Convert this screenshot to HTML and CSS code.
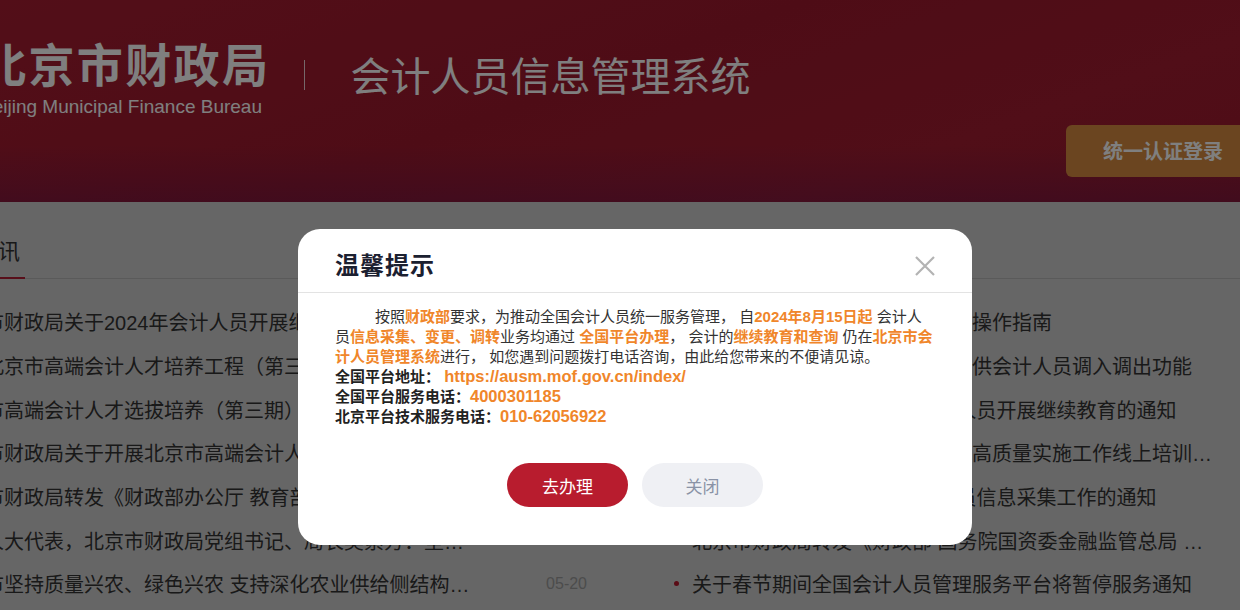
FILE: index.html
```html
<!DOCTYPE html>
<html lang="zh-CN">
<head>
    <meta charset="UTF-8">
    <meta name="viewport" content="width=device-width, initial-scale=1.0">
    <title>北京市财政局 - 会计人员信息管理系统</title>
    <link rel="stylesheet" href="styles.css">
</head>
<body>
    <!-- 头部 -->
    <div class="header">
        <div class="header-inner">
            <div class="brand">
                <div class="brand-cn">北京市财政局</div>
                <div class="brand-en">Beijing Municipal Finance Bureau</div>
            </div>
            <div class="brand-sep"></div>
            <div class="sys-title">会计人员信息管理系统</div>
            <a class="login-btn" href="#">统一认证登录</a>
        </div>
    </div>

    <!-- 通知资讯 -->
    <div class="main">
        <div class="news">
            <div class="tab-bar">
                <div class="tab active">通知资讯</div>
            </div>
            <div class="news-cols">
                <ul class="news-list">
                    <li><span class="news-title">北京市财政局关于2024年会计人员开展继续教育工作的通知</span><span class="news-date">06-12</span></li>
                    <li><span class="news-title">关于北京市高端会计人才培养工程（第三期）学员选拔结果的公示</span><span class="news-date">06-05</span></li>
                    <li><span class="news-title">北京市高端会计人才选拔培养（第三期）项目实施方案</span><span class="news-date">05-30</span></li>
                    <li><span class="news-title">北京市财政局关于开展北京市高端会计人才选拔培养（第三期）工作的通知</span><span class="news-date">05-28</span></li>
                    <li><span class="news-title">北京市财政局转发《财政部办公厅 教育部办公厅关于加强会计人才培养的通知》</span><span class="news-date">05-24</span></li>
                    <li><span class="news-title">全国人大代表，北京市财政局党组书记、局长吴素芳：坚持财政资金提质增效</span><span class="news-date">05-22</span></li>
                    <li><span class="news-title">北京市坚持质量兴农、绿色兴农 支持深化农业供给侧结构性改革</span><span class="news-date">05-20</span></li>
                </ul>
                <ul class="news-list">
                    <li><span class="news-title">全国会计人员统一服务管理平台操作指南</span><span class="news-date">08-15</span></li>
                    <li><span class="news-title">北京市会计人员信息管理系统提供会计人员调入调出功能</span><span class="news-date">07-02</span></li>
                    <li><span class="news-title">北京市财政局关于2024年会计人员开展继续教育的通知</span><span class="news-date">06-12</span></li>
                    <li><span class="news-title">北京市财政局关于会计人才培养高质量实施工作线上培训的通知</span><span class="news-date">05-30</span></li>
                    <li><span class="news-title">关于做好北京市2024年会计人员信息采集工作的通知</span><span class="news-date">05-24</span></li>
                    <li><span class="news-title">北京市财政局转发《财政部 国务院国资委金融监管总局 关于进一步加强会计人员管理的通知》</span><span class="news-date">05-22</span></li>
                    <li><span class="news-title">关于春节期间全国会计人员管理服务平台将暂停服务通知</span><span class="news-date">02-06</span></li>
                </ul>
            </div>
        </div>
    </div>

    <!-- 温馨提示弹窗 -->
    <div class="mask">
        <div class="dialog">
            <div class="dialog-header">
                <div class="dialog-title">温馨提示</div>
                <span class="dialog-close">
                    <svg width="22" height="22" viewBox="0 0 22 22">
                        <path d="M2 2 L20 20 M20 2 L2 20" stroke="#b3b3b3" stroke-width="2.2" fill="none"/>
                    </svg>
                </span>
            </div>
            <div class="dialog-body">
                <p class="notice">按照<b>财政部</b>要求，为推动全国会计人员统一服务管理， 自<b>2024年8月15日起</b> 会计人员<b>信息采集、变更、调转</b>业务均通过 <b>全国平台办理</b>， 会计的<b>继续教育和查询</b> 仍在<b>北京市会计人员管理系统</b>进行， 如您遇到问题拨打电话咨询，由此给您带来的不便请见谅。</p>
                <p class="info"><strong>全国平台地址：</strong> <b class="num">https://ausm.mof.gov.cn/index/</b></p>
                <p class="info"><strong>全国平台服务电话：</strong><b class="num">4000301185</b></p>
                <p class="info"><strong>北京平台技术服务电话：</strong><b class="num">010-62056922</b></p>
            </div>
            <div class="dialog-actions">
                <button class="btn btn-primary">去办理</button>
                <button class="btn btn-default">关闭</button>
            </div>
        </div>
    </div>
</body>
</html>
```

FILE: styles.css
```css
html, body {
    margin: 0;
    padding: 0;
    height: 100%;
    overflow: hidden;
}

body {
    font-family: "Liberation Sans", "Noto Sans CJK SC", sans-serif;
    background-color: #cccccc;
    color: #333;
}

/* 头部 */
.header {
    height: 202px;
    display: flex;
    justify-content: center;
    background:
        linear-gradient(180deg, rgba(70, 20, 90, 0) 72%, rgba(70, 20, 90, 0.3) 100%),
        linear-gradient(160deg, #a61d31 0%, #9d192d 45%, #a21c30 75%, #9c1a2e 100%);
}

.header-inner {
    flex: 0 0 1280px;
    display: flex;
    align-items: flex-start;
    padding-top: 36px;
    box-sizing: border-box;
    color: #fff;
}

.brand-cn {
    font-family: "Noto Sans CJK SC", sans-serif;
    font-size: 46px;
    font-weight: 700;
    line-height: 52px;
    letter-spacing: 2.4px;
}

.brand-en {
    font-size: 19px;
    line-height: 22px;
    margin-top: 8px;
}

.brand-sep {
    width: 1px;
    height: 30px;
    background-color: rgba(255, 255, 255, 0.8);
    margin: 24px 45px 0 34px;
}

.sys-title {
    font-family: "Noto Sans CJK SC", sans-serif;
    font-size: 40px;
    line-height: 48px;
    margin-top: 14px;
}

.login-btn {
    margin-left: auto;
    margin-top: 89px;
    height: 52px;
    line-height: 52px;
    padding: 0 37px;
    background-color: #d68a40;
    border-radius: 6px;
    color: #fff;
    font-family: "Noto Sans CJK SC", sans-serif;
    font-size: 20px;
    font-weight: 700;
    text-decoration: none;
}

/* 通知资讯 */
.main {
    display: flex;
    justify-content: center;
    padding: 32px 0 0 18px;
}

.news {
    flex: 0 0 1412px;
}

.tab-bar {
    display: flex;
    border-bottom: 1px solid #b4b4b4;
}

.tab {
    font-family: "Noto Sans CJK SC", sans-serif;
    font-size: 22px;
    line-height: 30px;
    padding: 0 5px 13px 9px;
    color: #333;
}

.tab.active {
    border-bottom: 2px solid #b01e34;
    margin-bottom: -1px;
}

.news-cols {
    display: flex;
    gap: 84px;
    margin-top: 21px;
}

.news-list {
    list-style: none;
    margin: 0;
    padding: 0;
    width: 664px;
}

.news-list li {
    display: flex;
    align-items: center;
    height: 43.7px;
}

.news-list li::before {
    content: "";
    width: 5px;
    height: 5px;
    border-radius: 50%;
    background-color: #b4182d;
    margin: 0 13px 0 3px;
    flex: 0 0 auto;
}

.news-title {
    flex: 0 0 526px;
    font-size: 20px;
    white-space: nowrap;
    overflow: hidden;
    text-overflow: ellipsis;
    color: #333;
}

.news-date {
    flex: 0 0 42px;
    margin-left: 75px;
    text-align: right;
    white-space: nowrap;
    font-size: 16px;
    color: #999;
}

/* 弹窗 */
.mask {
    position: fixed;
    top: 0;
    left: 0;
    right: 0;
    bottom: 0;
    background-color: rgba(0, 0, 0, 0.5);
    z-index: 999;
}

.dialog {
    position: absolute;
    top: 229px;
    left: 298px;
    width: 674px;
    background-color: #fff;
    border-radius: 22px;
    padding-bottom: 38px;
}

.dialog-header {
    height: 64px;
    box-sizing: border-box;
    padding: 6px 36px 0 37px;
    display: flex;
    align-items: center;
    justify-content: space-between;
    border-bottom: 1px solid #e3e3e3;
}

.dialog-title {
    font-family: "Noto Sans CJK SC", sans-serif;
    font-size: 24px;
    font-weight: 700;
    letter-spacing: 1px;
    color: #1b2030;
}

.dialog-close {
    display: flex;
    margin-top: 4px;
    cursor: pointer;
}

.dialog-body {
    width: 600px;
    padding: 14px 37px 0;
    font-size: 15px;
    line-height: 20px;
    color: #333;
}

.dialog-body p {
    margin: 0;
}

.notice {
    text-indent: 40px;
}

.notice b,
.info .num {
    color: #f0862a;
}

.info strong {
    color: #222;
}

.info .num {
    font-size: 16.5px;
    line-height: 1;
}

.dialog-actions {
    display: flex;
    justify-content: center;
    gap: 14px;
    margin-top: 36px;
}

.btn {
    width: 121px;
    height: 44px;
    border: none;
    border-radius: 22px;
    font-family: "Liberation Sans", "Noto Sans CJK SC", sans-serif;
    font-size: 17px;
    cursor: pointer;
}

.btn-primary {
    background-color: #b81c2e;
    color: #fff;
}

.btn-default {
    background-color: #eff0f4;
    color: #8a93a6;
}
```
